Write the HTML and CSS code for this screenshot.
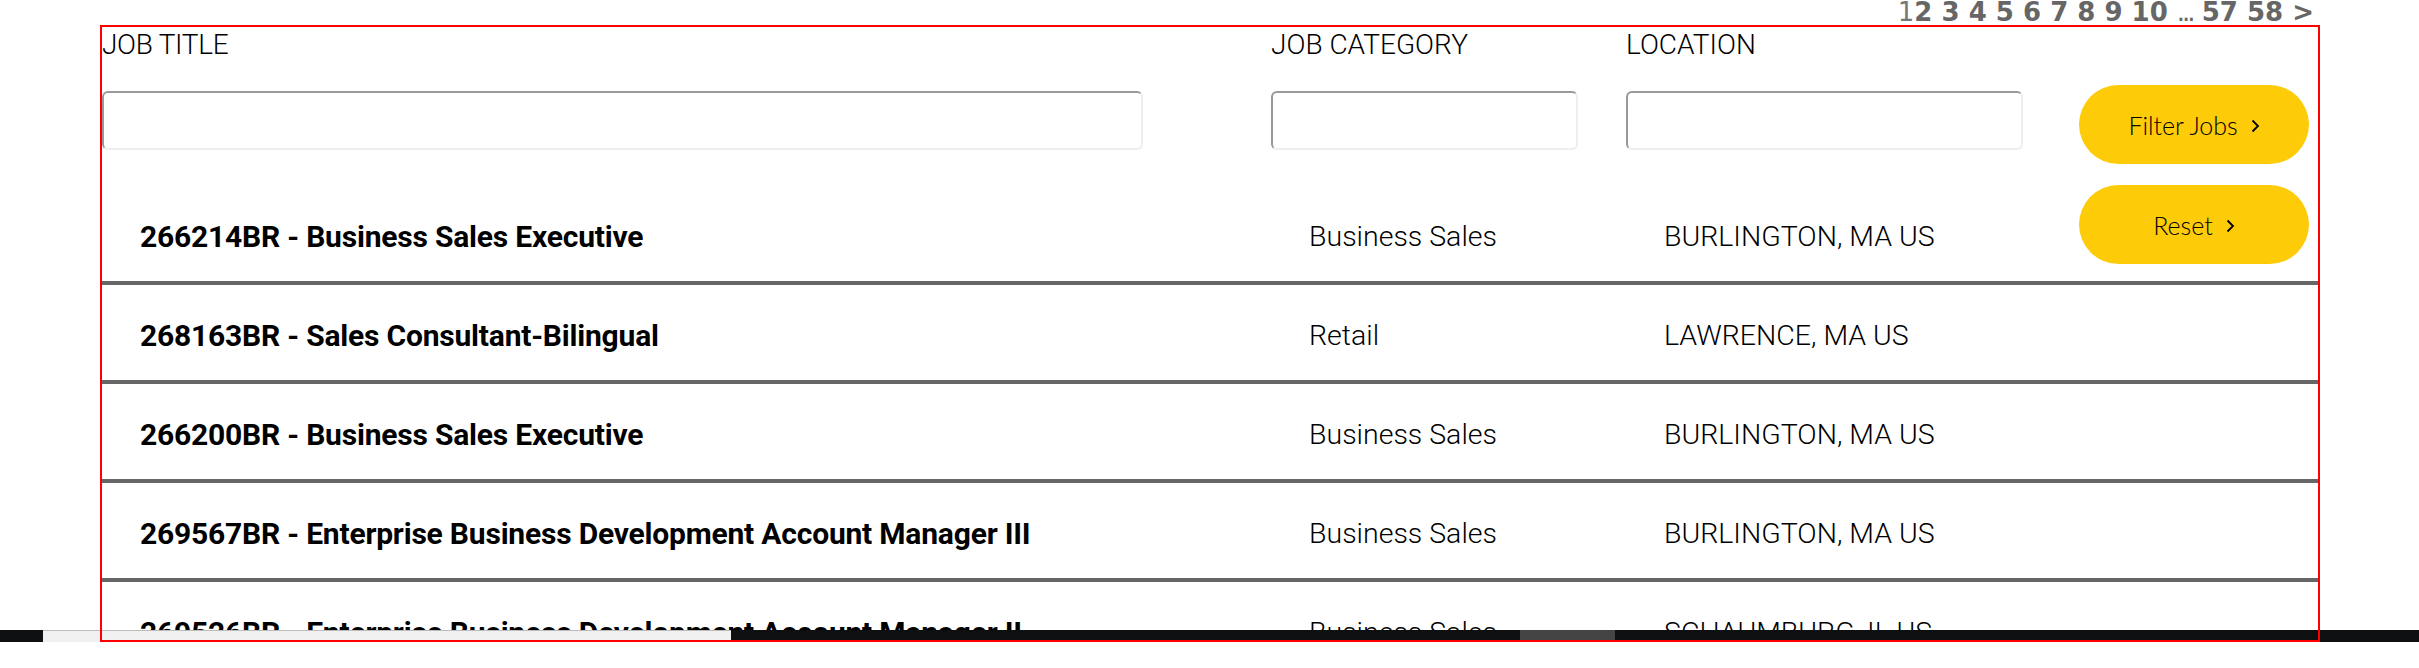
FILE: index.html
```html
<!DOCTYPE html>
<html lang="en">
<head>
<meta charset="utf-8">
<title>Jobs</title>
<link rel="stylesheet" href="styles.css">
</head>
<body>
<div class="stage">
  <nav class="pager"><span class="cur">1</span><a>2</a> <a>3</a> <a>4</a> <a>5</a> <a>6</a> <a>7</a> <a>8</a> <a>9</a> <a>10</a> <span class="dots">...</span> <a>57</a> <a>58</a> <a class="next">&gt;</a></nav>
  <div class="panel">
    <form class="filters">
      <div class="field f-title"><label>JOB TITLE</label><input type="text"></div>
      <div class="field f-cat"><label>JOB CATEGORY</label><input type="text"></div>
      <div class="field f-loc"><label>LOCATION</label><input type="text"></div>
      <div class="actions">
        <button type="button" class="btn">Filter Jobs <svg class="chev" width="9" height="14" viewBox="0 0 9 14"><polyline points="1.5,1.5 7,7 1.5,12.5" fill="none" stroke="#000" stroke-width="1.8"/></svg></button>
        <button type="button" class="btn">Reset <svg class="chev" width="9" height="14" viewBox="0 0 9 14"><polyline points="1.5,1.5 7,7 1.5,12.5" fill="none" stroke="#000" stroke-width="1.8"/></svg></button>
      </div>
    </form>
    <div class="jobs">
      <div class="job"><div class="c-title">266214BR - Business Sales Executive</div><div class="c-cat">Business Sales</div><div class="c-loc">BURLINGTON, MA US</div></div>
      <div class="job"><div class="c-title">268163BR - Sales Consultant-Bilingual</div><div class="c-cat">Retail</div><div class="c-loc">LAWRENCE, MA US</div></div>
      <div class="job"><div class="c-title">266200BR - Business Sales Executive</div><div class="c-cat">Business Sales</div><div class="c-loc">BURLINGTON, MA US</div></div>
      <div class="job"><div class="c-title">269567BR - Enterprise Business Development Account Manager III</div><div class="c-cat">Business Sales</div><div class="c-loc">BURLINGTON, MA US</div></div>
      <div class="job"><div class="c-title">269526BR - Enterprise Business Development Account Manager II</div><div class="c-cat">Business Sales</div><div class="c-loc">SCHAUMBURG, IL US</div></div>
    </div>
  </div>
  <div class="hscroll"><span class="seg-a"></span><span class="seg-b"></span><span class="seg-c"></span><span class="seg-d"></span><span class="seg-e"></span></div>
  <div class="outline"></div>
</div>
</body>
</html>
```
FILE: styles.css
```css
* { box-sizing: border-box; }
body {
  margin: 0;
  background: #fff;
  font-family: Roboto, "Liberation Sans", sans-serif;
  color: #000;
}
.stage {
  position: relative;
  width: 2419px;
  height: 668px;
  overflow: hidden;
}
.pager {
  height: 25px;
  text-align: right;
  padding-right: 105px;
  font: 700 26px/25px "DejaVu Sans", sans-serif;
  color: #666;
  white-space: nowrap;
}
.pager .cur {
  font-weight: 400;
  color: #777;
}
.pager .dots {
  font-weight: 400;
  letter-spacing: -3px;
}
.pager a { color: #666; }

.panel {
  margin: 2px 0 0 102px;
  width: 2216px;
  height: 603px;
  overflow: hidden;
}
.filters {
  display: flex;
  align-items: flex-start;
  height: 159px;
  margin: 0;
}
.field {
  display: flex;
  flex-direction: column;
}
.field label {
  margin-top: 2px;
  font-weight: 300;
  font-size: 28px;
  line-height: 32px;
  color: #000;
}
.f-title label { letter-spacing: -0.3px; }
.field input {
  margin-top: 30px;
  height: 59px;
  border: 2px solid;
  border-color: #999 #eee #eee #999;
  border-radius: 6px;
  background: #fff;
  outline: none;
}
.f-title { width: 1041px; }
.f-cat { width: 307px; margin-left: 128px; }
.f-loc { width: 397px; margin-left: 48px; }
.actions {
  position: relative;
  z-index: 1;
  width: 230px;
  margin: 58px 0 0 56px;
  display: flex;
  flex-direction: column;
  gap: 21px;
}
.btn {
  height: 79px;
  border: 0;
  border-radius: 40px;
  background: #fdcb08;
  color: #000;
  font: 300 25px Lato, "Open Sans", sans-serif;
  display: flex;
  align-items: center;
  justify-content: center;
  gap: 13px;
  padding: 0;
}
.chev { display: block; margin-top: 2px; }

.job {
  display: grid;
  grid-template-columns: 1169px 355px 1fr;
  align-items: center;
  height: 99px;
  padding-top: 5px;
  border-bottom: 4px solid #666;
}
.job > div { padding-left: 38px; white-space: nowrap; }
.c-title {
  font-weight: 700;
  font-size: 30px;
  letter-spacing: -0.2px;
}
.c-cat, .c-loc {
  font-weight: 300;
  font-size: 28.5px;
}

.hscroll {
  display: flex;
  height: 12px;
  background: #0e0f11;
}
.hscroll span { display: block; height: 100%; }
.seg-a { width: 43px; background: #0e0f11; }
.seg-b { width: 688px; background: #f0f0f0; border-top: 1px solid #bbb; }
.seg-c { width: 789px; background: #0e0f11; }
.seg-d { width: 95px; background: #444; }
.seg-e { flex: 1; background: #0e0f11; }

.outline {
  position: absolute;
  left: 100px;
  top: 25px;
  width: 2220px;
  height: 617px;
  border: 2px solid #f00;
  pointer-events: none;
}
```
